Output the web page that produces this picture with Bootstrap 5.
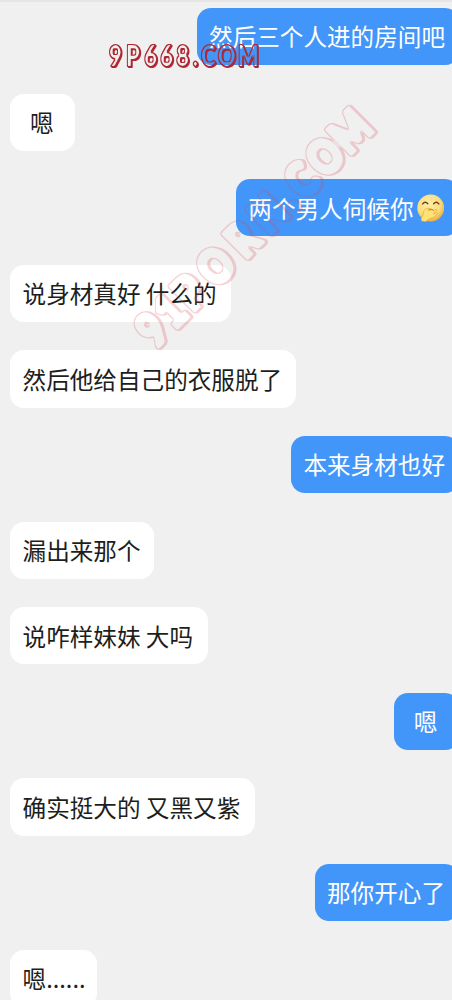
<!DOCTYPE html>
<html lang="zh-CN">
<head>
<meta charset="utf-8">
<meta name="viewport" content="width=device-width, initial-scale=1">
<title>聊天</title>
<link href="https://cdn.jsdelivr.net/npm/bootstrap@5.3.0/dist/css/bootstrap.min.css" rel="stylesheet">
<style>
html,body{height:1000px;overflow:hidden}
body{background:#f0f0f0;color:#1c1e20;font-family:"Noto Sans CJK SC",sans-serif;font-size:23.6px;line-height:34px}
.chat{height:1000px;border-top:2px solid #e5e5e5;padding:6px 0 0 10px;width:458.6px;gap:28.3px}
.bubble{flex:0 0 57.3px;height:57.3px;min-width:64.7px;padding:0 13.6px .6px 12.6px;border-radius:14px;background:#fff;white-space:pre}
.spaced{padding-right:14.7px}
.dots{padding-right:11.7px}
.mine{background:#4396f9;color:#fff;padding-left:12.4px;padding-right:13.6px}
.emoji{width:27.5px;height:28px;margin:0 1px 0 3px}
.marks{left:0;top:0;pointer-events:none;font-family:Lato,sans-serif;font-weight:900;text-anchor:middle;stroke-linejoin:round}
.site{font-size:27.5px;fill:#000;stroke:#000;stroke-width:2}
.tilt{font-size:46px;fill:#000;stroke:#000;stroke-width:7}
.faint{opacity:.23}
</style>
<script src="https://cdn.jsdelivr.net/npm/bootstrap@5.3.0/dist/js/bootstrap.bundle.min.js"></script>
</head>
<body class="position-relative">
<main class="chat d-flex flex-column align-items-start">
<div class="bubble mine d-flex align-items-center justify-content-center align-self-end">然后三个人进的房间吧</div>
<div class="bubble d-flex align-items-center justify-content-center">嗯</div>
<div class="bubble mine d-flex align-items-center justify-content-center align-self-end">两个男人伺候你<svg class="emoji" viewBox="0 0 28 28" aria-label="捂嘴笑">
<defs><radialGradient id="face" cx=".42" cy=".35" r=".68"><stop offset="0" stop-color="#ffefa6"/><stop offset=".65" stop-color="#fbdc7c"/><stop offset="1" stop-color="#e5ab45"/></radialGradient></defs>
<circle cx="14" cy="14" r="13.7" fill="url(#face)"/>
<path d="M5.800 9.800Q8.300 6.500 11 9.600M17 9.600Q19.700 6.500 22.200 9.800" fill="none" stroke="#70401e" stroke-width="1.500" stroke-linecap="round"/>
<path d="M4.500 27.200c-.9-3 1-4 1.700-6.400-.3-3.400 1.200-5.800 4.400-6.300 3.200-.5 5.200.6 6.300 2.200l2-1.200c1.400-.6 1.900.8.900 1.700l-3.100 2.800 3-1.200c1.400-.3 1.500 1 .3 1.700-1.400 2.200-3.600 3.700-6.400 4.200-2.300.5-3.600 2.600-4.600 3.300z" fill="#ffe274" stroke="#dd9d30" stroke-width=".6"/>
<path d="M11.500 16.200c2-.9 4.500-.8 5.400.5" fill="none" stroke="#ad6420" stroke-width=".9"/>
</svg></div>
<div class="bubble spaced d-flex align-items-center">说身材真好 什么的</div>
<div class="bubble d-flex align-items-center justify-content-center">然后他给自己的衣服脱了</div>
<div class="bubble mine d-flex align-items-center justify-content-center align-self-end">本来身材也好</div>
<div class="bubble d-flex align-items-center justify-content-center">漏出来那个</div>
<div class="bubble spaced d-flex align-items-center">说咋样妹妹 大吗</div>
<div class="bubble mine d-flex align-items-center justify-content-center align-self-end">嗯</div>
<div class="bubble spaced d-flex align-items-center">确实挺大的 又黑又紫</div>
<div class="bubble mine d-flex align-items-center justify-content-center align-self-end">那你开心了</div>
<div class="bubble dots d-flex align-items-center justify-content-center">嗯......</div>
</main>
<svg class="marks position-absolute" width="452" height="400" viewBox="0 0 452 400">
<defs>
<filter id="outline" filterUnits="userSpaceOnUse" x="0" y="0" width="452" height="400" color-interpolation-filters="sRGB">
<feMorphology in="SourceAlpha" operator="erode" radius="1" result="inner"/>
<feOffset in="SourceAlpha" dx=".7" dy=".7" result="shade"/>
<feMerge result="body"><feMergeNode in="shade"/><feMergeNode in="SourceAlpha"/></feMerge>
<feFlood flood-color="#ad2832"/>
<feComposite in2="body" operator="in"/>
<feComposite in2="inner" operator="out"/>
</filter>
<filter id="deep" filterUnits="userSpaceOnUse" x="0" y="0" width="452" height="400" color-interpolation-filters="sRGB">
<feMorphology in="SourceAlpha" operator="erode" radius="1" result="inner"/>
<feOffset in="SourceAlpha" dx="2" dy="0" result="shade"/>
<feMerge result="body"><feMergeNode in="shade"/><feMergeNode in="SourceAlpha"/></feMerge>
<feFlood flood-color="#d9454e"/>
<feComposite in2="body" operator="in"/>
<feComposite in2="inner" operator="out"/>
</filter>
</defs>
<g filter="url(#outline)"><text class="site" transform="translate(109 66) scale(.8 1)" x="8 30 52 72 92 108 124 147 174">9P668.COM</text></g>
<g class="faint" filter="url(#deep)"><text class="tilt" transform="translate(163 343) rotate(-45) scale(.84 1)" y="-1" x="2 33 65 109 154 197 226 254 293 336">91PORN.COM</text></g>
</svg>
</body>
</html>
